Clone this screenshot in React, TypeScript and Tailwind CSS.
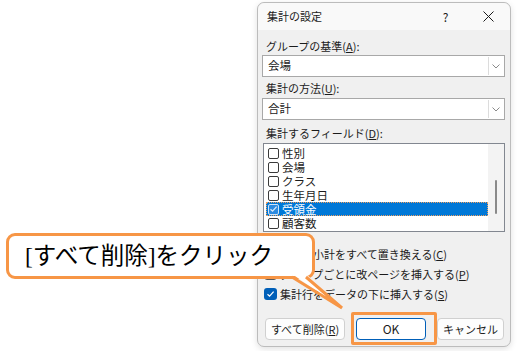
import React from 'react';

type Field = { name: string; checked?: boolean; selected?: boolean };

const fields: Field[] = [
  { name: '性別' },
  { name: '会場' },
  { name: 'クラス' },
  { name: '生年月日' },
  { name: '受領金', checked: true, selected: true },
  { name: '顧客数' },
];

const Check = ({ color = '#ffffff' }: { color?: string }) => (
  <svg width="9" height="8" viewBox="0 0 9 8">
    <path d="M1.5 4.2 L3.6 6.2 L7.6 1.6" fill="none" stroke={color} strokeWidth="1.2" />
  </svg>
);

const Combo = ({ value }: { value: string }) => (
  <div className="flex h-[22px] border border-[#a8a8a8] bg-white">
    <div className="flex flex-1 items-center pl-[5px] text-[11.5px]">{value}</div>
    <div className="my-[1px] mr-[1px] flex w-[15px] items-center justify-center border-l border-[#dcdcdc]">
      <svg width="8" height="5" viewBox="0 0 8 5">
        <path d="M0.5 0.5 L4 4 L7.5 0.5" fill="none" stroke="#8a8a8a" strokeWidth="1" />
      </svg>
    </div>
  </div>
);

const ListRow = ({ field }: { field: Field }) => (
  <div
    className={
      field.selected
        ? 'flex h-[14px] items-center gap-[3px] bg-[#0078d7] pl-[2px] text-white outline-1 outline-dotted outline-[#f0a060] -outline-offset-1'
        : 'flex h-[14px] items-center gap-[3px] pl-[2px]'
    }
  >
    {field.checked ? (
      <span className="flex h-[11px] w-[11px] items-center justify-center rounded-[2px] border border-[#cfe3f7] bg-[#2b8ae0]">
        <Check color="#dbe9f7" />
      </span>
    ) : (
      <span className="h-[11px] w-[11px] rounded-[2px] border border-[#3a3a3a] bg-white" />
    )}
    <span className="block h-[14px] overflow-hidden text-[11.5px] leading-[14px]">{field.name}</span>
  </div>
);

const OptionRow = ({ label, checked }: { label: React.ReactNode; checked?: boolean }) => (
  <div className="flex h-[20px] items-center gap-[3px] pl-[2px]">
    {checked ? (
      <span className="flex h-[12px] w-[13px] items-center justify-center rounded-[3px] bg-[#005fb8]">
        <Check />
      </span>
    ) : (
      <span className="h-[12px] w-[13px] rounded-[3px] border border-[#5a5a5a] bg-white" />
    )}
    <span className="text-[11px]">{label}</span>
  </div>
);

export default function App() {
  return (
    <div className="relative h-[351px] w-[520px] overflow-hidden bg-white text-[#1b1b1b] [font-family:'Noto_Sans_CJK_JP',sans-serif]">
      {/* DIALOG */}
      <div className="ml-[257px] mt-[2px] flex h-[345px] w-[254px] flex-col rounded-[7px] border border-[#bcbcbc] bg-[#f0f0f0] shadow-[0_2px_6px_rgba(0,0,0,0.12)]">
        <div className="flex h-[27px] items-center rounded-t-[7px] bg-[#f9f9f9] pl-[9px]">
          <span className="flex-1 text-[11px]">集計の設定</span>
          <span className="flex h-full w-[43px] items-center justify-center text-[12px]">?</span>
          <span className="flex h-full w-[43px] items-center justify-center">
            <svg width="11" height="11" viewBox="0 0 11 11">
              <path d="M0.5 0.5 L10.5 10.5 M10.5 0.5 L0.5 10.5" stroke="#1b1b1b" strokeWidth="1" />
            </svg>
          </span>
        </div>

        <div className="flex flex-1 flex-col pl-[4px] pr-[5px]">
          <div className="mt-[8px] h-[16px] pl-[4px] text-[11px] leading-[16px]">
            グループの基準(<u>A</u>):
          </div>
          <div className="mt-[1px]">
            <Combo value="会場" />
          </div>
          <div className="mt-[3px] h-[16px] pl-[4px] text-[11px] leading-[16px]">
            集計の方法(<u>U</u>):
          </div>
          <div className="mt-[2px]">
            <Combo value="合計" />
          </div>
          <div className="mt-[5px] h-[16px] pl-[4px] text-[11px] leading-[16px]">
            集計するフィールド(<u>D</u>):
          </div>

          {/* FIELD LIST */}
          <div className="ml-[1px] mt-[2px] flex h-[89px] border border-[#828790] bg-white">
            <div className="flex flex-1 flex-col overflow-hidden pl-[2px] pt-[2px]">
              {fields.map((f) => (
                <ListRow key={f.name} field={f} />
              ))}
            </div>
            <div className="flex w-[16px] justify-center bg-[#f3f3f3] pt-[36px]">
              <div className="h-[34px] w-[2px] rounded-full bg-[#8a8a8a]" />
            </div>
          </div>

          <div className="mt-[12px] flex flex-col">
            <OptionRow checked label={<>現在の小計をすべて置き換える(<u>C</u>)</>} />
            <OptionRow label={<>グループごとに改ページを挿入する(<u>P</u>)</>} />
            <OptionRow checked label={<>集計行をデータの下に挿入する(<u>S</u>)</>} />
          </div>

          {/* BUTTONS */}
          <div className="ml-[3px] mt-[14px] flex gap-[11px] text-[11px]">
            <div className="flex h-[22px] w-[80px] items-center justify-center rounded-[4px] border border-[#d0d0d0] bg-[#fdfdfd]">
              すべて削除(<u>R</u>)
            </div>
            <div className="flex h-[22px] w-[70px] items-center justify-center rounded-[4px] border border-[#005fb8] bg-white text-[12px]">
              OK
            </div>
            <div className="flex h-[22px] w-[67px] items-center justify-center rounded-[4px] border border-[#d0d0d0] bg-[#fdfdfd]">
              キャンセル
            </div>
          </div>
        </div>
      </div>

      {/* HIGHLIGHT AROUND OK */}
      <div className="absolute left-[351px] top-[312px] h-[33px] w-[86px] rounded-[2px] border-[3px] border-[#f79646]" />

      {/* CALLOUT */}
      <div className="absolute left-[6px] top-[233px] flex h-[46px] w-[309px] items-center rounded-[9px] border-[3px] border-[#f79646] bg-white pl-[16px]">
        <span className="text-[23.5px] leading-[30px] text-black [font-family:'Liberation_Serif','Noto_Sans_CJK_JP',serif]">
          [すべて削除]をクリック
        </span>
      </div>
      <svg className="pointer-events-none absolute left-0 top-0" width="520" height="351" viewBox="0 0 520 351">
        <polygon points="292,274 306,274 342,308" fill="#ffffff" />
        <polyline points="292,277 342,308 306,277" fill="none" stroke="#f79646" strokeWidth="3" strokeLinejoin="miter" />
      </svg>
    </div>
  );
}
